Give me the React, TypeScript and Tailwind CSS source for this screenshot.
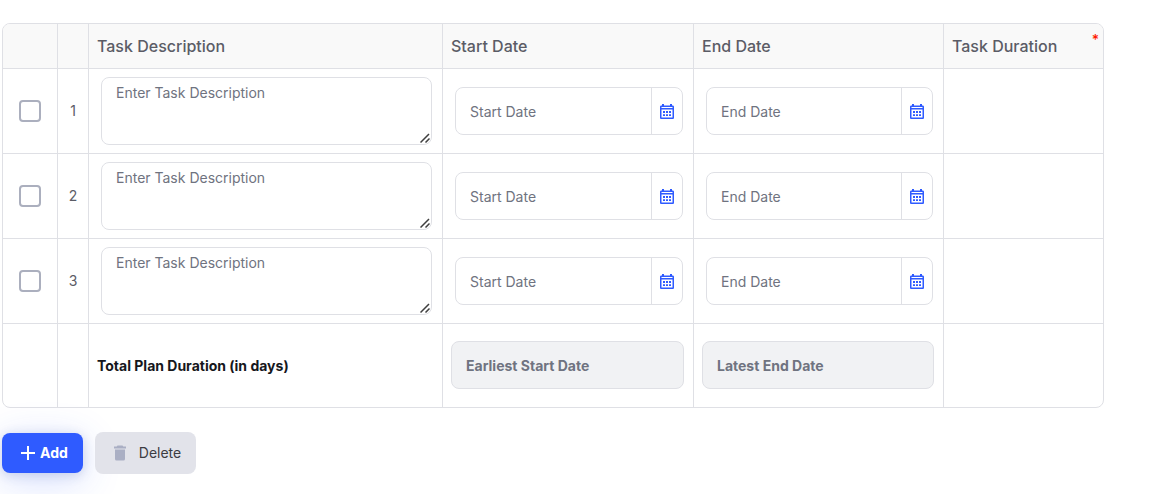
import React from 'react';

interface FieldProps {
  id: string;
  label: string;
}

function CalendarIcon() {
  return (
    <svg viewBox="0 0 14 15" className="h-[15px] w-3.5" fill="currentColor" aria-hidden="true">
      <path
        fillRule="evenodd"
        d="M2 0h2v1.500h6V0h2v1.500h.7c.7 0 1.300.6 1.300 1.300v10.900c0 .7-.6 1.300-1.300 1.300H1.300C.6 15 0 14.400 0 13.700V2.800c0-.7.6-1.300 1.300-1.300H2zM1.500 3v1h11V3zM1.500 5.500v8h11v-8z"
      />
      <path d="M3 7h2v2H3zM6 7h2v2H6zM9 7h2v2H9zM3 10.300h2v1.700H3zM6 10.300h2v1.700H6zM9 10.300h2v1.700H9z" />
    </svg>
  );
}

function TrashIcon() {
  return (
    <svg viewBox="0 0 14 18" className="h-[18px] w-3.5" fill="#aaafc4" aria-hidden="true">
      <path d="M4.500 1.500h5l.8 1H13v2H1v-2h2.700z" />
      <path d="M2 5.500h10V15a1.500 1.500 0 0 1-1.500 1.500h-7A1.500 1.500 0 0 1 2 15z" />
    </svg>
  );
}

function DateField({ id, label }: FieldProps) {
  return (
    <div className="flex h-12 overflow-hidden rounded-lg border border-[#dfe0e5] bg-white">
      <input
        id={id}
        type="text"
        aria-label={label}
        placeholder={label}
        className="min-w-0 flex-1 px-3.5 pt-0.5 text-sm text-[#5b5c66] outline-none placeholder:text-[#6f7380]"
      />
      <button
        type="button"
        aria-label={`Choose ${label}`}
        className="flex w-[31px] shrink-0 items-center justify-center border-l border-[#dfe0e5] text-[#2f5bff]"
      >
        <CalendarIcon />
      </button>
    </div>
  );
}

function DescriptionField({ id, label }: FieldProps) {
  return (
    <div className="relative">
      <textarea
        id={id}
        aria-label={label}
        placeholder={`Enter ${label}`}
        className="block h-[68px] w-full resize-none rounded-lg border border-[#dfe0e5] px-3.5 py-[5px] text-sm text-[#5b5c66] outline-none placeholder:text-[#6f7380]"
      />
      {/* resize grip */}
      <svg
        viewBox="0 0 10 10"
        className="pointer-events-none absolute right-0.5 bottom-0.5 size-2.5"
        stroke="#3f3f3f"
        strokeWidth="1.500"
        aria-hidden="true"
      >
        <path d="M.5 9.500l8.500-8.500M5.500 9.500L9.500 5.500" />
      </svg>
    </div>
  );
}

function TotalField({ id, label }: FieldProps) {
  return (
    <input
      id={id}
      type="text"
      disabled
      aria-label={label}
      placeholder={label}
      className="block h-12 w-full rounded-lg border border-[#dfe0e5] bg-[#f1f2f4] px-3.5 pt-0.5 text-sm font-bold placeholder:text-[#6f7380]"
    />
  );
}

function TaskRow({ index }: { index: number }) {
  return (
    <tr className="h-[85px]">
      <td className="border-r">
        <input
          type="checkbox"
          aria-label={`Select row ${index}`}
          className="mx-auto block size-[22px] appearance-none rounded border-2 border-[#abafbe] bg-white checked:bg-[#2f5bff]"
        />
      </td>
      <td className="border-r text-center text-sm text-[#5b5c66]">{index}</td>
      <td className="border-r pr-2.5 pl-3">
        <DescriptionField id={`description-${index}`} label="Task Description" />
      </td>
      <td className="border-r pr-2.5 pl-3">
        <DateField id={`start-${index}`} label="Start Date" />
      </td>
      <td className="border-r pr-2.5 pl-3">
        <DateField id={`end-${index}`} label="End Date" />
      </td>
      <td></td>
    </tr>
  );
}

export default function App() {
  const rows = [1, 2, 3];

  return (
    <main className="min-h-screen overflow-hidden bg-white pt-[23px] pr-[49px] pl-0.5 font-['Inter',sans-serif]">
      <div className="overflow-hidden rounded-lg border border-[#dfe0e5]">
        <table className="w-full table-fixed border-separate border-spacing-0 [&_td]:border-[#dfe0e5] [&_tbody_td]:border-b">
          <colgroup>
            <col className="w-[55px]" />
            <col className="w-[31px]" />
            <col className="w-[354px]" />
            <col className="w-[251px]" />
            <col className="w-[250px]" />
            <col />
          </colgroup>
          <thead>
            <tr className="h-[45px] bg-[#f9f9f9] text-left text-base text-[#5b5c66] [&_th]:border-b [&_th]:border-[#dfe0e5] [&_th]:pl-2 [&_th]:font-medium">
              <th className="border-r"></th>
              <th className="border-r"></th>
              <th className="border-r">Task Description</th>
              <th className="border-r">Start Date</th>
              <th className="border-r">End Date</th>
              <th>
                <div className="flex justify-between pr-1">
                  Task Duration
                  <span className="-mt-1 text-sm text-[#ff1a00]">*</span>
                </div>
              </th>
            </tr>
          </thead>
          <tbody>
            {rows.map((index) => (
              <TaskRow key={index} index={index} />
            ))}
          </tbody>
          <tfoot>
            <tr className="h-[83px]">
              <td className="border-r"></td>
              <td className="border-r"></td>
              <td className="border-r px-2 text-sm font-bold text-[#16171c]">
                Total Plan Duration (in days)
              </td>
              <td className="border-r pr-[9px] pb-0.5 pl-2">
                <TotalField id="earliest-start" label="Earliest Start Date" />
              </td>
              <td className="border-r pr-[9px] pb-0.5 pl-2">
                <TotalField id="latest-end" label="Latest End Date" />
              </td>
              <td></td>
            </tr>
          </tfoot>
        </table>
      </div>

      <div className="mt-6 flex items-center gap-3">
        <button
          type="button"
          className="flex h-10 items-center gap-1 rounded-lg bg-[#2f5bff] pr-[15px] pl-[18px] text-sm font-bold text-white shadow-[0_8px_40px_rgba(47,91,255,0.2),0_2px_12px_rgba(47,70,140,0.2)]"
        >
          <svg viewBox="0 0 16 16" className="size-4" stroke="currentColor" strokeWidth="2" aria-hidden="true">
            <path d="M8 1v14M1 8h14" />
          </svg>
          Add
        </button>
        <button
          type="button"
          className="flex h-[42px] items-center gap-3 rounded-lg bg-[#e2e3ea] pr-[15px] pl-[18px] text-sm text-[#3c3c42]"
        >
          <TrashIcon />
          Delete
        </button>
      </div>
    </main>
  );
}
